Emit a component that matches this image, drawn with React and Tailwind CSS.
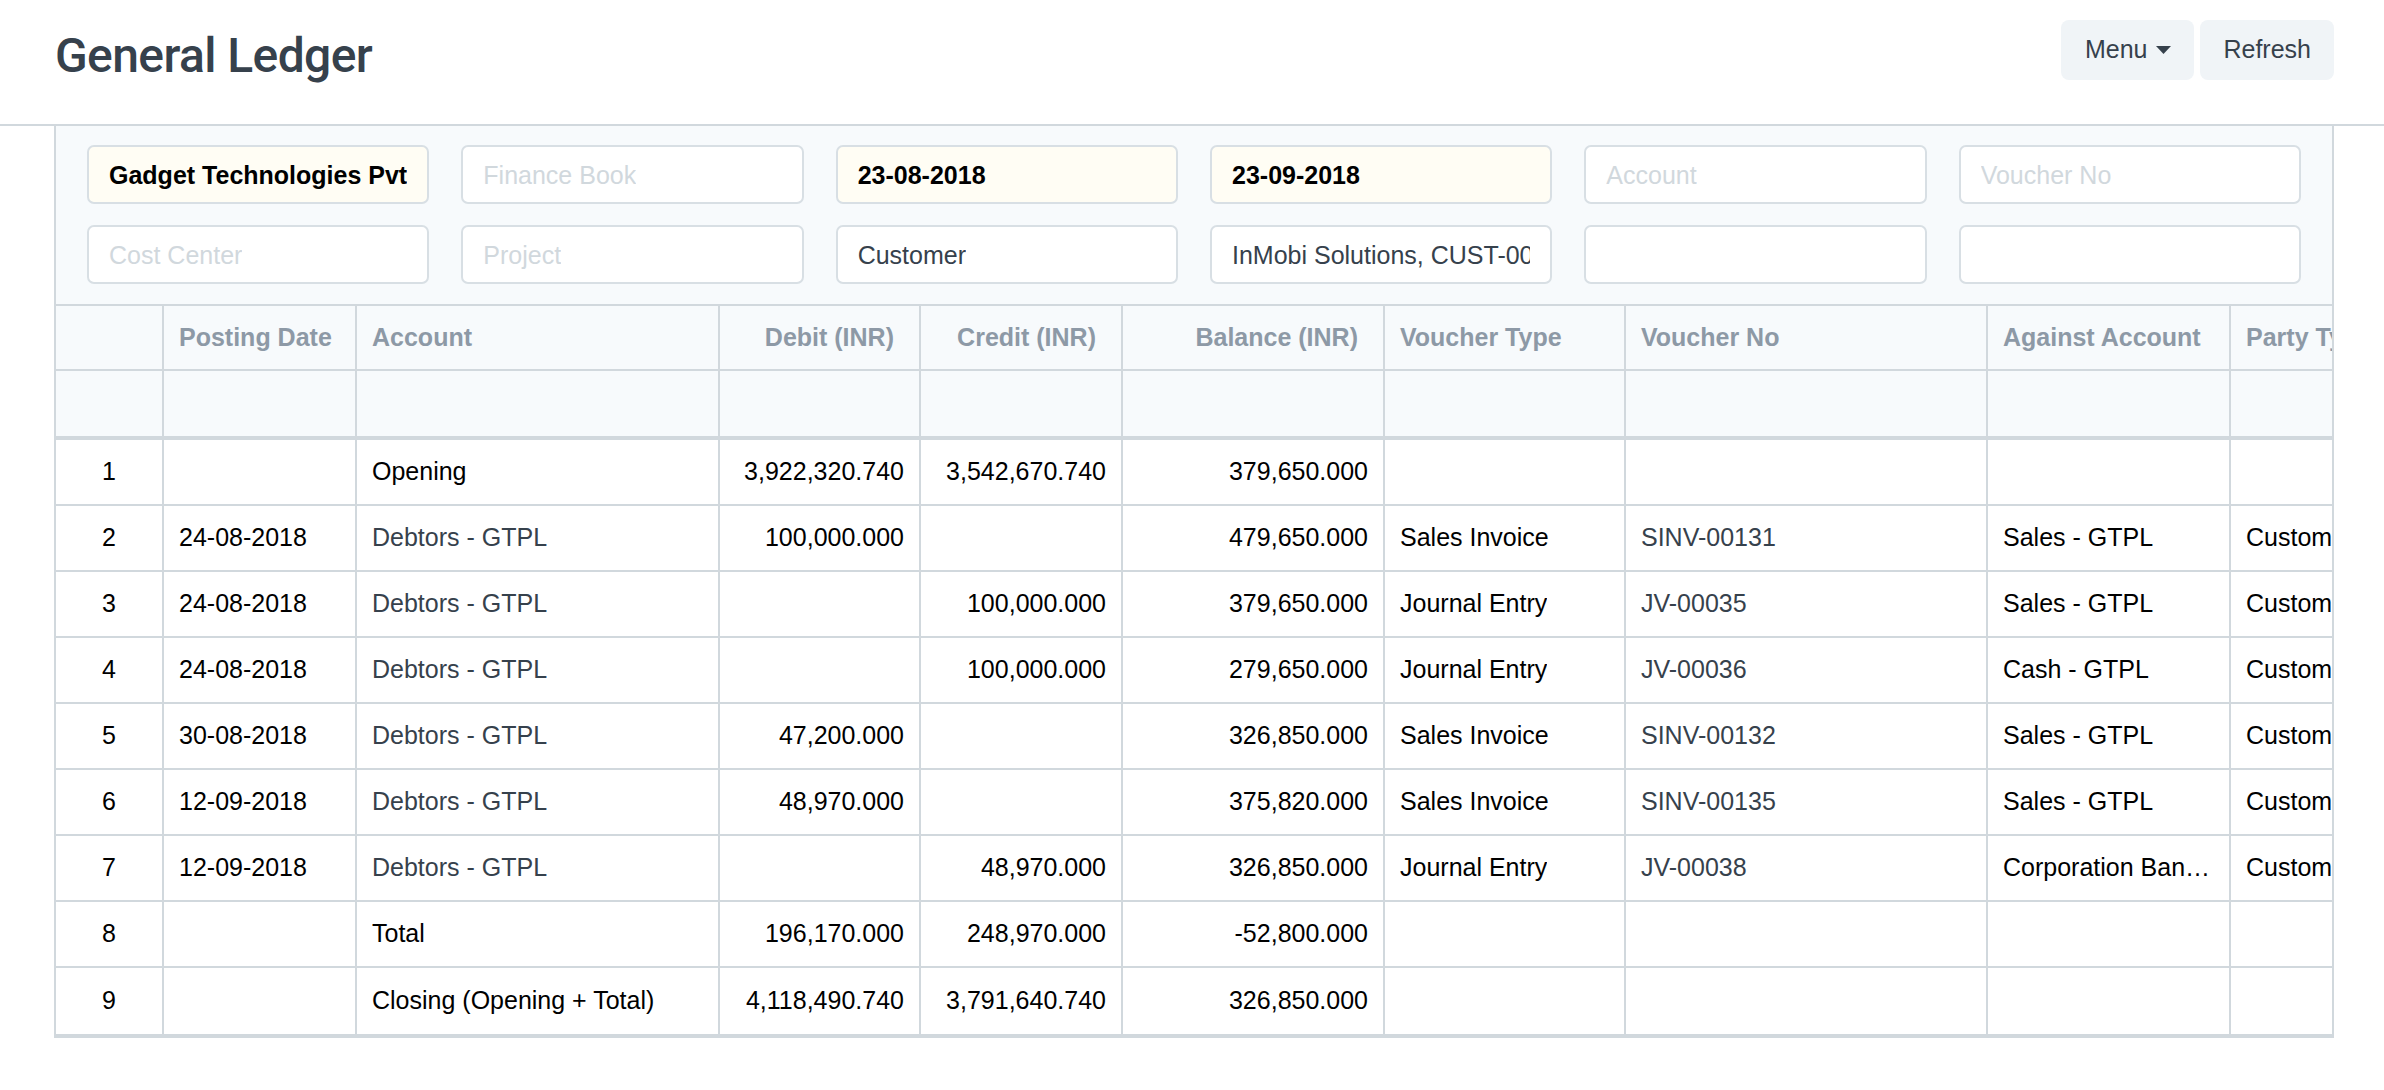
import React from 'react';

const columns = [
  { key: 'idx', label: '', width: 'w-[108px]', align: 'center' },
  { key: 'date', label: 'Posting Date', width: 'w-[193px]', align: 'left' },
  { key: 'account', label: 'Account', width: 'w-[363px]', align: 'left' },
  { key: 'debit', label: 'Debit (INR)', width: 'w-[201px]', align: 'right' },
  { key: 'credit', label: 'Credit (INR)', width: 'w-[202px]', align: 'right' },
  { key: 'balance', label: 'Balance (INR)', width: 'w-[262px]', align: 'right' },
  { key: 'vtype', label: 'Voucher Type', width: 'w-[241px]', align: 'left' },
  { key: 'vno', label: 'Voucher No', width: 'w-[362px]', align: 'left' },
  { key: 'against', label: 'Against Account', width: 'w-[243px]', align: 'left' },
  { key: 'party', label: 'Party Type', width: 'w-[220px]', align: 'left' },
  { key: 'partyName', label: 'Party', width: 'w-[240px]', align: 'left' },
];

const gl = [
  { idx: 1, account: 'Opening', debit: '3,922,320.740', credit: '3,542,670.740', balance: '379,650.000' },
  { idx: 2, date: '24-08-2018', account: 'Debtors - GTPL', accLink: true, debit: '100,000.000', balance: '479,650.000', vtype: 'Sales Invoice', vno: 'SINV-00131', against: 'Sales - GTPL', party: 'Customer', partyName: 'InMobi Solutions' },
  { idx: 3, date: '24-08-2018', account: 'Debtors - GTPL', accLink: true, credit: '100,000.000', balance: '379,650.000', vtype: 'Journal Entry', vno: 'JV-00035', against: 'Sales - GTPL', party: 'Customer', partyName: 'InMobi Solutions' },
  { idx: 4, date: '24-08-2018', account: 'Debtors - GTPL', accLink: true, credit: '100,000.000', balance: '279,650.000', vtype: 'Journal Entry', vno: 'JV-00036', against: 'Cash - GTPL', party: 'Customer', partyName: 'InMobi Solutions' },
  { idx: 5, date: '30-08-2018', account: 'Debtors - GTPL', accLink: true, debit: '47,200.000', balance: '326,850.000', vtype: 'Sales Invoice', vno: 'SINV-00132', against: 'Sales - GTPL', party: 'Customer', partyName: 'InMobi Solutions' },
  { idx: 6, date: '12-09-2018', account: 'Debtors - GTPL', accLink: true, debit: '48,970.000', balance: '375,820.000', vtype: 'Sales Invoice', vno: 'SINV-00135', against: 'Sales - GTPL', party: 'Customer', partyName: 'InMobi Solutions' },
  { idx: 7, date: '12-09-2018', account: 'Debtors - GTPL', accLink: true, credit: '48,970.000', balance: '326,850.000', vtype: 'Journal Entry', vno: 'JV-00038', against: 'Corporation Bank - GTPL', party: 'Customer', partyName: 'InMobi Solutions' },
  { idx: 8, account: 'Total', debit: '196,170.000', credit: '248,970.000', balance: '-52,800.000' },
  { idx: 9, account: 'Closing (Opening + Total)', debit: '4,118,490.740', credit: '3,791,640.740', balance: '326,850.000' },
];

const filters = [
  { value: 'Gadget Technologies Pvt. Ltd.', bold: true, mandatory: true },
  { placeholder: 'Finance Book' },
  { value: '23-08-2018', bold: true, mandatory: true },
  { value: '23-09-2018', bold: true, mandatory: true },
  { placeholder: 'Account' },
  { placeholder: 'Voucher No' },
  { placeholder: 'Cost Center' },
  { placeholder: 'Project' },
  { value: 'Customer' },
  { value: 'InMobi Solutions, CUST-00004' },
  {},
  {},
];

function FilterInput({ value, placeholder, bold, mandatory }) {
  return (
    <div
      className={`h-[59px] rounded-[7px] border-2 border-[#d8dfe4] px-[20px] pt-[3px] flex items-center ${
        mandatory ? 'bg-[#fffdf4]' : 'bg-white'
      }`}
    >
      <div
        className={`overflow-hidden whitespace-nowrap text-[25px] ${
          value ? (bold ? 'font-bold text-black' : 'text-[#36414c]') : 'text-[#d1d8dd]'
        }`}
      >
        {value || placeholder || ''}
      </div>
    </div>
  );
}

function cellAlign(align) {
  if (align === 'right') return 'justify-end text-right';
  if (align === 'center') return 'justify-center text-center';
  return 'justify-start text-left';
}

function GeneralLedger() {
  return (
    <div className="min-h-screen bg-white font-['Liberation_Sans',Arial,sans-serif] text-black">
      <div className="border-b-2 border-[#d1d8dd] h-[126px]">
        <div className="ml-[54px] w-[2280px] flex justify-between items-start">
          <h1 className="mt-[32px] ml-[1px] font-['Roboto',sans-serif] font-medium text-[48px] leading-none tracking-[-0.6px] text-[#36414c]">
            General Ledger
          </h1>
          <div className="mt-[20px] flex gap-[6px]">
            <button className="h-[60px] pl-[24px] pr-[23px] rounded-[8px] bg-[#f0f4f7] text-[25px] text-[#36414c] flex items-center gap-[9px]">
              Menu
              <svg width="15" height="8" viewBox="0 0 15 8">
                <path d="M0 0 L15 0 L7.5 8 Z" fill="#36414c" />
              </svg>
            </button>
            <button className="h-[60px] px-[23px] rounded-[8px] bg-[#f0f4f7] text-[25px] text-[#36414c]">
              Refresh
            </button>
          </div>
        </div>
      </div>

      <div className="ml-[54px] w-[2280px] border-x-2 border-b-4 border-[#d1d8dd] overflow-hidden">
        <div className="bg-[#f7fafc] pt-[19px] pb-[20px] pl-[31px] pr-[31px] border-b-2 border-[#d1d8dd]">
          <div className="grid grid-cols-6 gap-x-[32px] gap-y-[21px]">
            {filters.map((f, i) => (
              <FilterInput key={i} {...f} />
            ))}
          </div>
        </div>

        <div className="flex h-[65px] bg-[#f7fafc] border-b-2 border-[#d1d8dd]">
          {columns.map((c) => (
            <div
              key={c.key}
              className={`${c.width} shrink-0 border-r-2 border-[#d1d8dd] flex items-center overflow-hidden px-[15px] ${cellAlign(
                c.align === 'center' ? 'left' : c.align
              )} ${c.align === 'right' ? 'pr-[25px]' : ''}`}
            >
              <span className="text-[25px] font-bold text-[#8d99a6] whitespace-nowrap">{c.label}</span>
            </div>
          ))}
        </div>

        <div className="flex h-[69px] bg-[#f7fafc] border-b-4 border-[#d1d8dd]">
          {columns.map((c) => (
            <div key={c.key} className={`${c.width} shrink-0 border-r-2 border-[#d1d8dd]`} />
          ))}
        </div>

        {gl.map((row, ri) => (
          <div
            key={row.idx}
            className={`flex h-[66px] bg-white ${ri < gl.length - 1 ? 'border-b-2 border-[#d1d8dd]' : ''}`}
          >
            {columns.map((c) => {
              const val = row[c.key];
              const isLink = (c.key === 'account' && row.accLink) || (c.key === 'vno' && val);
              return (
                <div
                  key={c.key}
                  className={`${c.width} shrink-0 border-r-2 border-[#d1d8dd] flex items-center overflow-hidden px-[15px] ${cellAlign(
                    c.align
                  )}`}
                >
                  <span className={`text-[25px] truncate ${isLink ? 'text-[#36414c]' : 'text-black'}`}>
                    {val}
                  </span>
                </div>
              );
            })}
          </div>
        ))}
      </div>
    </div>
  );
}

export default function App() {
  return <GeneralLedger />;
}
